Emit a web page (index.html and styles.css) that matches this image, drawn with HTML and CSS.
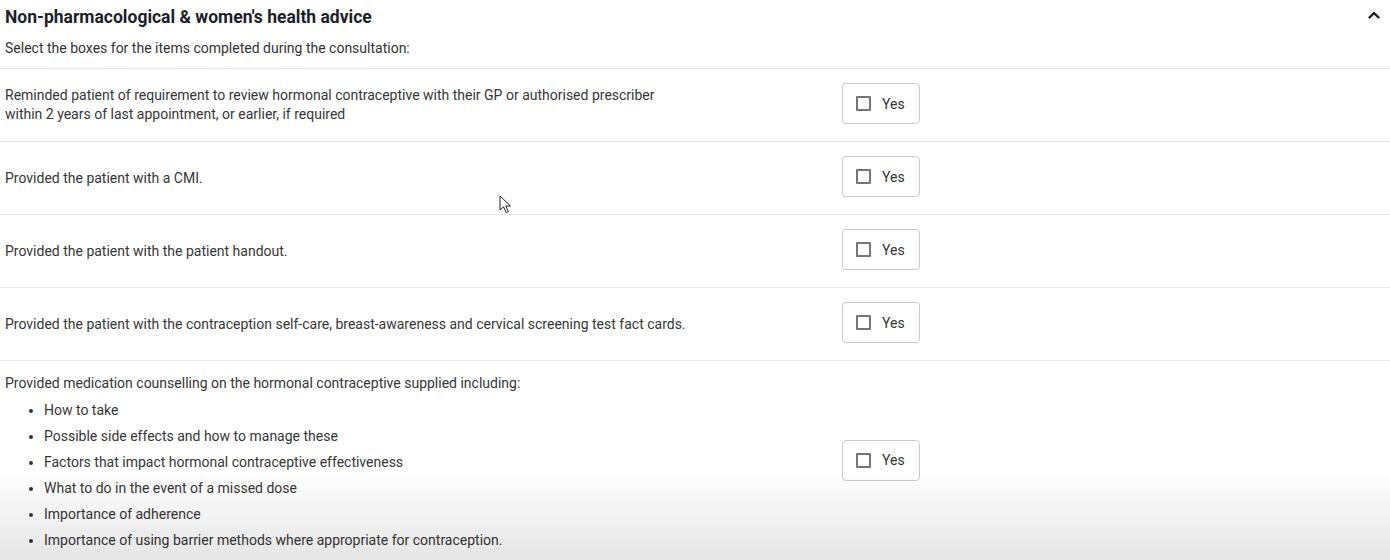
FILE: index.html
```html
<!DOCTYPE html>
<html lang="en">
<head>
<meta charset="utf-8">
<title>Non-pharmacological advice</title>
<link rel="stylesheet" href="styles.css">
</head>
<body>
<section class="panel">
  <header class="panel-head">
    <h2 class="panel-title">Non-pharmacological &amp; women's health advice</h2>
    <button class="collapse" aria-label="Collapse">
      <svg width="12" height="8" viewBox="0 0 12 8"><path d="M1.5 6.5 L6 2 L10.5 6.5" fill="none" stroke="#1d1d2b" stroke-width="2.4" stroke-linecap="round" stroke-linejoin="round"/></svg>
    </button>
  </header>
  <p class="intro">Select the boxes for the items completed during the consultation:</p>

  <div class="row">
    <div class="label narrow">Reminded patient of requirement to review hormonal contraceptive with their GP or authorised prescriber within 2 years of last appointment, or earlier, if required</div>
    <label class="yes"><span class="box"></span><span>Yes</span></label>
  </div>
  <div class="row">
    <div class="label">Provided the patient with a CMI.</div>
    <label class="yes"><span class="box"></span><span>Yes</span></label>
  </div>
  <div class="row">
    <div class="label">Provided the patient with the patient handout.</div>
    <label class="yes"><span class="box"></span><span>Yes</span></label>
  </div>
  <div class="row">
    <div class="label">Provided the patient with the contraception self-care, breast-awareness and cervical screening test fact cards.</div>
    <label class="yes"><span class="box"></span><span>Yes</span></label>
  </div>
  <div class="row row-list">
    <div class="label">
      <p class="list-lead">Provided medication counselling on the hormonal contraceptive supplied including:</p>
      <ul class="points">
        <li>How to take</li>
        <li>Possible side effects and how to manage these</li>
        <li>Factors that impact hormonal contraceptive effectiveness</li>
        <li>What to do in the event of a missed dose</li>
        <li>Importance of adherence</li>
        <li>Importance of using barrier methods where appropriate for contraception.</li>
      </ul>
    </div>
    <label class="yes"><span class="box"></span><span>Yes</span></label>
  </div>
</section>
<svg class="cursor" width="14" height="20" viewBox="0 0 14 20"><path d="M1 1 L1 15 L4.5 11.8 L7.2 17.5 L9.4 16.5 L6.8 11 L11.5 11 Z" fill="#fff" stroke="#222" stroke-width="1" stroke-linejoin="round"/></svg>
<div class="shade"></div>
</body>
</html>
```

FILE: styles.css
```css
html, body {
  margin: 0;
  padding: 0;
  background: #ffffff;
}
body {
  font-family: Roboto, "Liberation Sans", Arial, sans-serif;
  color: #363636;
  font-size: 14px;
  width: 1390px;
  height: 560px;
  overflow: hidden;
  position: relative;
}
.panel-head {
  display: flex;
  align-items: center;
  justify-content: space-between;
  padding: 7px 10px 0 5px;
  height: 20px;
}
.panel-title {
  margin: 0;
  font-size: 17.5px;
  line-height: 20px;
  font-weight: 700;
  color: #1c1f2a;
}
.collapse {
  border: 0;
  background: none;
  padding: 0;
  display: flex;
  align-items: center;
  margin-top: -4px;
}
.intro {
  margin: 0;
  padding: 11px 5px 0 5px;
  line-height: 20px;
  height: 30px;
  color: #333;
}
.row {
  display: grid;
  grid-template-columns: 837px 78px;
  align-items: center;
  padding: 0 0 0 5px;
  height: 72px;
  border-top: 1px solid #e6e6e6;
}
.label {
  line-height: 19px;
}
.narrow {
  max-width: 680px;
}
.yes {
  box-sizing: border-box;
  height: 41px;
  width: 78px;
  border: 1px solid #c9c9c9;
  border-radius: 4px;
  display: flex;
  align-items: center;
  gap: 11px;
  padding-left: 13px;
  color: #333;
  font-size: 14px;
  background: #fff;
  margin-bottom: 3px;
}
.box {
  box-sizing: border-box;
  width: 15px;
  height: 15px;
  border: 2px solid #767676;
  border-radius: 1px;
}
.row-list {
  height: auto;
  padding-top: 12px;
  padding-bottom: 6px;
}
.list-lead {
  margin: 0 0 4px;
  line-height: 20px;
}
.points {
  margin: 0;
  padding-left: 39px;
}
.points li {
  line-height: 26px;
}
.row-list .yes {
  margin-bottom: 0;
  margin-top: -6px;
}
.cursor {
  position: absolute;
  left: 499px;
  top: 195px;
}
.shade {
  position: absolute;
  left: 0;
  right: 0;
  bottom: 0;
  height: 90px;
  background: linear-gradient(to bottom, rgba(0,0,0,0), rgba(0,0,0,0.1));
  pointer-events: none;
}
```
